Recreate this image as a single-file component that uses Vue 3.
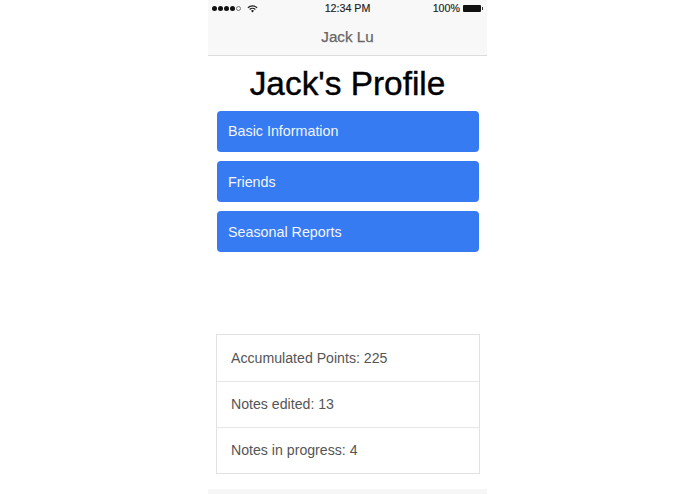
<script setup>
const links = ['Basic Information', 'Friends', 'Seasonal Reports']
const stats = ['Accumulated Points: 225', 'Notes edited: 13', 'Notes in progress: 4']
</script>

<template>
  <div class="page">
    <div class="phone">
      <header class="topbar">
        <div class="status">
          <div class="status-left">
            <span class="signal">
              <i v-for="n in 4" :key="n" class="dot"></i>
              <i class="dot dot--empty"></i>
            </span>
            <svg class="wifi" width="11" height="9" viewBox="0 0 10 8">
              <path d="M0.4 2.9A6.6 6.6 0 0 1 9.6 2.9L8.8 3.8A5.4 5.4 0 0 0 1.2 3.8Z" fill="#222" />
              <path d="M2 4.5A4.3 4.3 0 0 1 8 4.5L7.2 5.4A3.1 3.1 0 0 0 2.8 5.4Z" fill="#222" />
              <path d="M3.6 6.1A2 2 0 0 1 6.4 6.1L5 7.7Z" fill="#222" />
            </svg>
          </div>
          <span class="time">12:34 PM</span>
          <div class="status-right">
            <span>100%</span>
            <span class="battery"></span>
          </div>
        </div>
        <div class="nav-title">Jack Lu</div>
      </header>

      <h1 class="title">Jack's Profile</h1>

      <div class="links">
        <a v-for="link in links" :key="link" class="link-btn">{{ link }}</a>
      </div>

      <ul class="stats">
        <li v-for="item in stats" :key="item">{{ item }}</li>
      </ul>

      <div class="bottom"></div>
    </div>
  </div>
</template>

<style>
html, body {
  margin: 0;
  background: #fff;
}
</style>

<style scoped>
.page {
  width: 695px;
  height: 494px;
  overflow: hidden;
  display: flex;
  padding-left: 208px;
  box-sizing: border-box;
  font-family: "Liberation Sans", Arial, sans-serif;
}

.phone {
  width: 279px;
  height: 494px;
  display: flex;
  flex-direction: column;
}

.topbar {
  height: 56px;
  box-sizing: border-box;
  background: #f8f8f8;
  border-bottom: 1px solid #dcdcdc;
}

.status {
  height: 16px;
  padding: 0 4px;
  display: grid;
  grid-template-columns: 1fr auto 1fr;
  align-items: center;
  font-size: 10.7px;
  color: #222;
  -webkit-text-stroke: 0.15px #222;
}

.status-left {
  display: flex;
  align-items: center;
  gap: 6px;
}

.signal {
  display: flex;
  gap: 1px;
}

.dot {
  width: 5px;
  height: 5px;
  border-radius: 50%;
  background: #111;
  box-sizing: border-box;
}

.dot--empty {
  background: none;
  border: 1px solid #777;
}

.wifi {
  display: block;
}

.time {
  text-align: center;
}

.status-right {
  display: flex;
  justify-content: flex-end;
  align-items: center;
  gap: 3px;
}

.battery {
  position: relative;
  width: 18px;
  height: 7px;
  background: #111;
  border-radius: 1px;
  margin-right: 2px;
}

.battery::after {
  content: "";
  position: absolute;
  right: -2px;
  top: 2px;
  width: 1px;
  height: 3px;
  background: #333;
}

.nav-title {
  text-align: center;
  font-size: 15.2px;
  line-height: 42px;
  color: #666;
  -webkit-text-stroke: 0.25px #666;
}

.title {
  margin: 10px 0 9px;
  text-align: center;
  font-size: 33.4px;
  font-weight: 400;
  line-height: 36px;
  color: #000;
  -webkit-text-stroke: 0.4px #000;
}

.links {
  display: flex;
  flex-direction: column;
  gap: 9px;
  padding: 0 8px 0 9px;
}

.link-btn {
  height: 41px;
  box-sizing: border-box;
  display: flex;
  align-items: center;
  padding: 0 11px;
  background: #377bf3;
  border-radius: 4px;
  color: #f2f6ff;
  font-size: 14.3px;
}

.link-btn:first-child {
  padding-bottom: 2px;
}

.stats {
  list-style: none;
  margin: 82px 7px 0 8px;
  padding: 0;
  border: 1px solid #e2e2e2;
  color: #555;
  font-size: 14.15px;
}

.stats li {
  height: 45.5px;
  box-sizing: border-box;
  display: flex;
  align-items: center;
  padding: 0 14px;
}

.stats li + li {
  height: 46.25px;
  border-top: 1px solid #e6e6e6;
}

.bottom {
  flex: 1;
  margin-top: 15px;
  background: #f6f6f6;
}
</style>
